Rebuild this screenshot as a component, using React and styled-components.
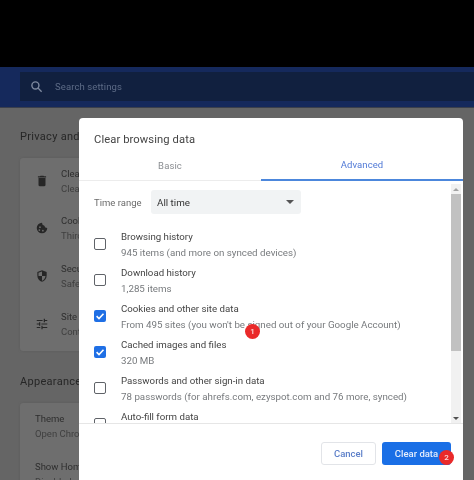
import React from "react";
import styled, { createGlobalStyle } from "styled-components";

const Global = createGlobalStyle`
  html, body { margin: 0; padding: 0; background: #000; }
  * { box-sizing: border-box; }
`;
const Screen = styled.div`
  position: relative; width: 474px; height: 480px; overflow: hidden; background: #000;
  font-family: Roboto, "Liberation Sans", sans-serif; filter: blur(0.45px);
`;
const TopBlack = styled.div`height: 67px; background: #000;`;
const Header = styled.header`
  height: 41px; background: #15295c; padding: 5px 0 6px 20px; display: flex;
  border-bottom: 1px solid #3a3f4c;
`;
const SearchBox = styled.div`
  flex: 1; background: #11203f; display: flex; align-items: center; gap: 12px; padding-left: 10px;
  color: #5d6b86; font-size: 9.5px; letter-spacing: 0.1px;
`;
const Page = styled.main`
  height: 372px; background: #656565; padding: 22px 20px 0; color: #222; font-size: 10px;
`;
const SectionTitle = styled.div`font-size: 11px; line-height: 13px; color: #262626; margin-bottom: 15px; letter-spacing: .3px;`;
const Card = styled.div`
  background: #6e6e6e; border-radius: 3px; box-shadow: 0 0 2px #5a5a5a; margin-bottom: 24px;
  width: 100px; padding-bottom: ${p => p.$pb || 0}px;
`;
const CardRow = styled.div`
  height: ${p => p.$h || 48}px; display: flex; align-items: center; gap: 12px; padding-left: ${p => p.$pad ?? 15}px;
  color: #2e2e2e; font-size: 9.5px;
`;
const RowText = styled.div`line-height: 15px; white-space: nowrap; span { display: block; color: #3f3f3f; }`;
const Modal = styled.section`
  position: absolute; left: 79px; top: 118px; width: 384px; height: 380px; background: #fff;
  border-radius: 4px 4px 0 0; display: flex; flex-direction: column; color: #3c4043;
`;
const ModalTitle = styled.h2`
  margin: 0; padding: 15px 15px 0; height: 34px; font-weight: 400; font-size: 11.2px; color: #444;
  letter-spacing: 0.1px;
`;
const Tabs = styled.div`display: flex; height: 29px;`;
const Tab = styled.div`
  width: ${p => p.$w}px; display: flex; align-items: center; justify-content: center; font-size: 9.5px; letter-spacing: .1px;
  padding-bottom: 2px;
  color: ${p => p.$active ? "#5079d6" : "#8a8d91"};
  border-bottom: ${p => p.$active ? "2px solid #4c87dc" : "1px solid #ececec"};
`;
const Body = styled.div`height: 243px; display: flex; border-bottom: 1px solid #e6e6e6; overflow: hidden;`;
const Content = styled.div`flex: 1; padding: 9px 0 0 15px; overflow: hidden;`;
const RangeRow = styled.div`display: flex; align-items: center; height: 24px; margin-bottom: 12px; font-size: 9.5px;`;
const RangeLabel = styled.div`width: 57px; color: #6b6b6b;`;
const Select = styled.div`
  width: 150px; height: 24px; background: #f1f3f4; border-radius: 3px; padding: 0 6px; display: flex;
  align-items: center; justify-content: space-between; color: #333; font-size: 9.8px;
`;
const Caret = styled.div`
  width: 0; height: 0; border-left: 4px solid transparent; border-right: 4px solid transparent;
  border-top: 4px solid #555; margin-right: 1px;
`;
const Item = styled.div`display: flex; align-items: center; height: 36px;`;
const Check = styled.div`
  width: 12px; height: 12px; border-radius: 2px; flex: none; margin-right: 15px;
  display: flex; align-items: center; justify-content: center;
  background: ${p => p.$on ? "#1f6fe5" : "#fff"};
  border: ${p => p.$on ? "none" : "1.6px solid #5f6368"};
`;
const ItemText = styled.div`white-space: nowrap; line-height: 16px; padding-top: 1px;`;
const ItemTitle = styled.div`font-size: 9.7px; color: #444;`;
const ItemSub = styled.div`font-size: 9.75px; color: #777a7d;`;
const Scrollbar = styled.div`
  width: 10px; margin: 3px 2px 0 0; background: #f1f1f1; display: flex; flex-direction: column;
  align-items: center;
`;
const Arrow = styled.div`
  height: 10px; flex: none; display: flex; align-items: center; justify-content: center;
  &::after { content: ""; border-left: 3px solid transparent; border-right: 3px solid transparent;
    ${p => p.$up ? "border-bottom: 3px solid #a3a3a3;" : "border-top: 3px solid #505050;"} }
`;
const Thumb = styled.div`width: 100%; height: 157px; background: #c1c1c1;`;
const ScrollGap = styled.div`flex: 1;`;
const Footer = styled.div`display: flex; justify-content: flex-end; gap: 6px; padding: 18px 12px 0 0;`;
const Button = styled.div`
  position: relative; height: 23px; display: flex; align-items: center; justify-content: center;
  border-radius: 3px; font-size: 9.5px; font-weight: 500; width: ${p => p.$w}px;
  background: ${p => p.$primary ? "#1a6fe6" : "#fff"};
  color: ${p => p.$primary ? "#e6eefc" : "#5c7fc9"};
  border: ${p => p.$primary ? "none" : "1px solid #e2e4e8"};
`;
const Badge = styled.div`
  position: absolute; width: 15px; height: 15px; border-radius: 50%; background: #ea2a2a; color: #fbdede;
  font-size: 8px; font-weight: 500; display: flex; align-items: center; justify-content: center;
  ${p => p.$css}
`;

const items = [
  ["Browsing history", "945 items (and more on synced devices)", false],
  ["Download history", "1,285 items", false],
  ["Cookies and other site data", "From 495 sites (you won't be signed out of your Google Account)", true],
  ["Cached images and files", "320 MB", true],
  ["Passwords and other sign-in data", "78 passwords (for ahrefs.com, ezyspot.com and 76 more, synced)", false],
  ["Auto-fill form data", "", false],
];

const Tick = () => (
  <svg width="10" height="10" viewBox="0 0 10 10" fill="none" stroke="#fff" strokeWidth="1.6">
    <path d="M1.6 5.2 4 7.5 8.5 2.8" />
  </svg>
);
const Ic = ({ children, size = 14 }) => (
  <svg width={size} height={size} viewBox="0 0 24 24" fill="#262626" style={{ flex: "none" }}>{children}</svg>
);

export default function App() {
  return (
    <Screen>
      <Global />
      <TopBlack />
      <Header>
        <SearchBox>
          <svg width="13" height="13" viewBox="0 0 24 24" fill="none" stroke="#7f8aa0" strokeWidth="2.6">
            <circle cx="10" cy="10" r="6.5" /><path d="M15 15l6.5 6.5" />
          </svg>
          Search settings
        </SearchBox>
      </Header>
      <Page>
        <SectionTitle>Privacy and security</SectionTitle>
        <Card $pb={3}>
          <CardRow $h={46}>
            <Ic><path d="M6 19c0 1.100.9 2 2 2h8c1.100 0 2-.9 2-2V7H6v12zM19 4h-3.500l-1-1h-5l-1 1H5v2h14V4z" /></Ic>
            <RowText>Clear<span>Clear</span></RowText>
          </CardRow>
          <CardRow>
            <Ic><path d="M12 3a9 9 0 1 0 9 9 5 5 0 0 1-5-4 5 5 0 0 1-4-5zM8.500 9a1.500 1.500 0 1 1 0 3 1.500 1.500 0 0 1 0-3zm-1 5a1.500 1.500 0 1 1 0 3 1.500 1.500 0 0 1 0-3zm6 1a1.500 1.500 0 1 1 0 3 1.500 1.500 0 0 1 0-3z" /></Ic>
            <RowText>Cook<span>Third</span></RowText>
          </CardRow>
          <CardRow>
            <Ic><path d="M12 2 4 5v6c0 5 3.400 9.700 8 11 4.600-1.300 8-6 8-11V5l-8-3zm0 10h6c-.5 3.900-3 7.300-6 8.200V12H6V6.300l6-2.200V12z" /></Ic>
            <RowText>Secu<span>Safe</span></RowText>
          </CardRow>
          <CardRow>
            <Ic><path d="M3 17v2h6v-2H3zM3 5v2h10V5H3zm10 16v-2h8v-2h-8v-2h-2v6h2zM7 9v2H3v2h4v2h2V9H7zm14 4v-2H11v2h10zm-6-4h2V7h4V5h-4V3h-2v6z" /></Ic>
            <RowText>Site<span>Cont</span></RowText>
          </CardRow>
        </Card>
        <SectionTitle>Appearance</SectionTitle>
        <Card>
          <CardRow $h={45}><RowText>Theme<span>Open Chrome</span></RowText></CardRow>
          <CardRow $h={52}><RowText>Show Home<span>Disabled</span></RowText></CardRow>
        </Card>
      </Page>
      <Modal>
        <ModalTitle>Clear browsing data</ModalTitle>
        <Tabs>
          <Tab $w={182}>Basic</Tab>
          <Tab $w={202} $active>Advanced</Tab>
        </Tabs>
        <Body>
          <Content>
            <RangeRow>
              <RangeLabel>Time range</RangeLabel>
              <Select>All time<Caret /></Select>
            </RangeRow>
            {items.map(([t, s, on]) => (
              <Item key={t}>
                <Check $on={on}>{on && <Tick />}</Check>
                <ItemText>
                  <ItemTitle>{t}</ItemTitle>
                  <ItemSub>{s || "\u00a0"}</ItemSub>
                </ItemText>
              </Item>
            ))}
          </Content>
          <Scrollbar>
            <Arrow $up />
            <Thumb />
            <ScrollGap />
            <Arrow />
          </Scrollbar>
        </Body>
        <Footer>
          <Button $w={55}>Cancel</Button>
          <Button $w={69} $primary>
            Clear data
            <Badge $css="right: -3px; top: 8px;">2</Badge>
          </Button>
        </Footer>
        <Badge $css="left: 166px; top: 206px;">1</Badge>
      </Modal>
    </Screen>
  );
}
